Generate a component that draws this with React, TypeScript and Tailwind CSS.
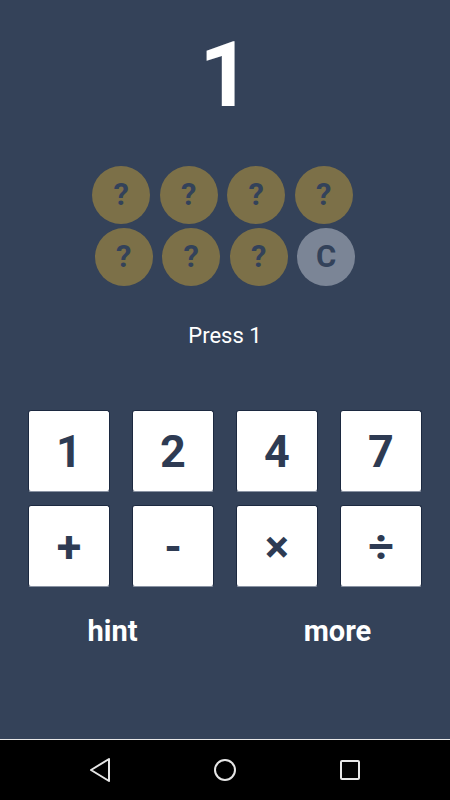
import React from 'react';

const slots = ['?', '?', '?', '?', '?', '?', '?', 'C'];
const digits = ['1', '2', '4', '7'];
const ops = ['+', '-', '×', '÷'];

function Slot({ label }: { label: string }) {
  const isClear = label === 'C';
  return (
    <div
      className={`w-[58px] h-[58px] rounded-full flex items-center justify-center text-[31px] font-bold text-[#33425a] ${
        isClear ? 'bg-[#7b8596]' : 'bg-[#7c7048]'
      }`}
    >
      {label}
    </div>
  );
}

function Key({ label }: { label: string }) {
  return (
    <button className="w-[82px] h-[82px] rounded-[3px] bg-white border border-[#1c2940] border-b-[#8a93a3] flex items-center justify-center text-[45px] leading-none font-bold text-[#2e3b53]">
      {label}
    </button>
  );
}

export default function App() {
  return (
    <div className="w-[450px] h-[800px] flex flex-col bg-[#344259] font-['Roboto','Liberation_Sans',sans-serif]">
      <main className="flex-1 flex flex-col items-center">
        {/* Target number */}
        <div className="mt-[31px] text-[90px] leading-none font-bold text-white">1</div>

        {/* Answer slots */}
        <div className="mt-[45px] flex flex-col items-center gap-[4px]">
          <div className="flex gap-[9.5px] pr-[5px]">
            {slots.slice(0, 4).map((s, i) => (
              <Slot key={i} label={s} />
            ))}
          </div>
          <div className="flex gap-[9.5px]">
            {slots.slice(4).map((s, i) => (
              <Slot key={i} label={s} />
            ))}
          </div>
        </div>

        <p className="mt-[37px] text-[22px] leading-[26px] text-white">Press 1</p>

        {/* Keypad */}
        <div className="mt-[61px] grid grid-cols-4 gap-x-[22px] gap-y-[13px]">
          {digits.map((d) => (
            <Key key={d} label={d} />
          ))}
          {ops.map((o) => (
            <Key key={o} label={o} />
          ))}
        </div>

        <div className="mt-[27px] w-full grid grid-cols-2 text-[29px] leading-[34px] font-bold text-white">
          <span className="text-center">hint</span>
          <span className="text-center">more</span>
        </div>
      </main>

      {/* Android nav bar */}
      <nav className="h-[61px] bg-black border-t border-[#e8e8e8] flex items-center justify-center">
        <div className="w-[125px] flex justify-center">
          <svg width="24" height="26" viewBox="0 0 24 26" fill="none" stroke="#e6e6e6" strokeWidth="2" strokeLinejoin="round">
            <path d="M21 2 L3 13 L21 24 Z" />
          </svg>
        </div>
        <div className="w-[125px] flex justify-center">
          <svg width="24" height="24" viewBox="0 0 24 24" fill="none" stroke="#e6e6e6" strokeWidth="2">
            <circle cx="12" cy="12" r="10" />
          </svg>
        </div>
        <div className="w-[125px] flex justify-center">
          <svg width="22" height="22" viewBox="0 0 22 22" fill="none" stroke="#e6e6e6" strokeWidth="2" strokeLinejoin="round">
            <rect x="2" y="2" width="18" height="18" rx="1" />
          </svg>
        </div>
      </nav>
    </div>
  );
}
